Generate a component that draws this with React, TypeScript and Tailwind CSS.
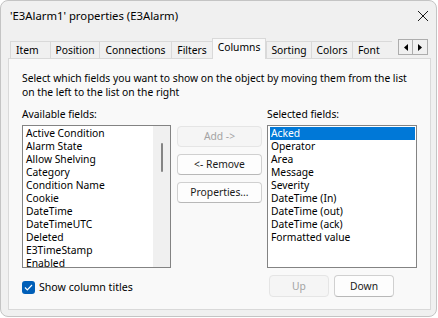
import React from 'react'

const tabs = [
  { label: 'Item', w: 'w-[40px]', pad: 'pl-[5px]' },
  { label: 'Position', w: 'w-[49px]', pad: 'justify-center' },
  { label: 'Connections', w: 'w-[72px]', pad: 'justify-center' },
  { label: 'Filters', w: 'w-[41px]', pad: 'justify-center' },
  { label: 'Columns', w: 'w-[54px]', pad: 'justify-center', active: true },
  { label: 'Sorting', w: 'w-[45px]', pad: 'justify-center' },
  { label: 'Colors', w: 'w-[41px]', pad: 'justify-center' },
  { label: 'Font', w: 'w-[40px]', pad: 'pl-[5px]' },
]

const available = [
  'Active Condition',
  'Alarm State',
  'Allow Shelving',
  'Category',
  'Condition Name',
  'Cookie',
  'DateTime',
  'DateTimeUTC',
  'Deleted',
  'E3TimeStamp',
  'Enabled',
]

const selected = [
  'Acked',
  'Operator',
  'Area',
  'Message',
  'Severity',
  'DateTime (In)',
  'DateTime (out)',
  'DateTime (ack)',
  'Formatted value',
]

function Button({ children, disabled, className = '' }: { children: React.ReactNode; disabled?: boolean; className?: string }) {
  return (
    <button
      type="button"
      className={`h-[21px] rounded-[4px] border leading-none ${
        disabled
          ? 'border-[#e5e5e5] bg-[#f5f5f5] text-[#a3a3a3]'
          : 'border-[#d0d0d0] border-b-[#b8b8b8] bg-[#fdfdfd] text-[#1a1a1a]'
      } ${className}`}
    >
      {children}
    </button>
  )
}

export default function App() {
  return (
    <div className="w-[438px] h-[318px] bg-white font-['Noto_Sans',sans-serif] text-[10.3px] text-black">
      <div className="w-[437px] h-[317px] rounded-[8px] border border-[#c4c4c4] bg-[#f0f0f0] flex flex-col overflow-hidden">
        <div className="h-[37px] flex items-start justify-between">
          <div className="pl-[9px] pt-[7px] leading-[16px] text-[11.3px]">'E3Alarm1' properties (E3Alarm)</div>
          <svg width="12" height="12" viewBox="0 0 12 12" className="mt-[9px] mr-[7px]">
            <path d="M1 1L11 11M11 1L1 11" stroke="#1a1a1a" strokeWidth="1" />
          </svg>
        </div>

        <div className="flex items-end h-[20px] pl-[9px]">
          {tabs.map((t) =>
            t.active ? (
              <div
                key={t.label}
                className={`${t.w} h-[21px] -mb-px relative z-10 border border-b-0 border-[#d9d9d9] bg-[#f9f9f9] flex items-center ${t.pad} pb-[2px]`}
              >
                {t.label}
              </div>
            ) : (
              <div
                key={t.label}
                className={`${t.w} h-[17px] border border-b-0 border-r-0 border-[#d9d9d9] bg-[#f0f0f0] flex items-center ${t.pad} pt-[1px] whitespace-nowrap`}
              >
                {t.label}
              </div>
            )
          )}
          <div className="ml-[6px] mb-[3px] flex border border-[#adadad] bg-[#f0f0f0] h-[16px]">
            <div className="w-[14px] flex items-center justify-center border-r border-[#adadad]">
              <svg width="4" height="7" viewBox="0 0 4 7">
                <path d="M4 0L0 3.5L4 7Z" fill="#000" />
              </svg>
            </div>
            <div className="w-[14px] flex items-center justify-center">
              <svg width="4" height="7" viewBox="0 0 4 7">
                <path d="M0 0L4 3.5L0 7Z" fill="#000" />
              </svg>
            </div>
          </div>
        </div>

        <div className="ml-[7px] w-[423px] h-[252px] border border-[#d9d9d9] bg-[#f9f9f9] px-[13px] pt-[13px]">
          <p className="leading-[13.5px] whitespace-nowrap">
            Select which fields you want to show on the object by moving them from the list
            <br />
            on the left to the list on the right
          </p>

          <div className="flex mt-[9px]">
            <div className="w-[149px] flex flex-col">
              <div className="leading-[13px] mb-[4px]">Available fields:</div>
              <div className="h-[143px] border border-[#838383] bg-white flex overflow-hidden">
                <div className="flex-1 pl-[3px] pt-px overflow-hidden">
                  {available.map((f) => (
                    <div key={f} className="h-[13px] leading-[13px] whitespace-nowrap">
                      {f}
                    </div>
                  ))}
                </div>
                <div className="w-[17px] bg-[#f0f0f0] flex justify-center pt-[17px]">
                  <div className="w-[2px] h-[29px] rounded-full bg-[#858585] ml-[1px]" />
                </div>
              </div>
              <label className="flex items-center gap-[4px] mt-[13px]">
                <span className="w-[13px] h-[13px] rounded-[3px] bg-[#005fb8] flex items-center justify-center">
                  <svg width="9" height="7" viewBox="0 0 9 7">
                    <path d="M1 3.5L3.3 5.8L8 1" stroke="#fff" strokeWidth="1.2" fill="none" />
                  </svg>
                </span>
                <span className="leading-[13px] text-[10.6px]">Show column titles</span>
              </label>
            </div>

            <div className="w-[85px] ml-[6px] pt-[18px] flex flex-col gap-[7px]">
              <Button disabled>Add -&gt;</Button>
              <Button className="h-[20px]">&lt;- Remove</Button>
              <Button>Properties...</Button>
            </div>

            <div className="w-[150px] ml-[5px] flex flex-col">
              <div className="leading-[13px] mb-[4px]">Selected fields:</div>
              <div className="h-[143px] border border-[#838383] bg-white p-[1px] pl-[2px]">
                {selected.map((f, i) => (
                  <div
                    key={f}
                    className={`h-[13px] leading-[13px] pl-[1px] whitespace-nowrap ${
                      i === 0 ? 'bg-[#0078d7] text-white' : ''
                    }`}
                  >
                    {f}
                  </div>
                ))}
              </div>
              <div className="flex gap-[5px] mt-[7px] ml-[2px]">
                <Button disabled className="w-[60px] h-[22px]">Up</Button>
                <Button className="w-[60px] h-[22px]">Down</Button>
              </div>
            </div>
          </div>
        </div>
      </div>
    </div>
  )
}
